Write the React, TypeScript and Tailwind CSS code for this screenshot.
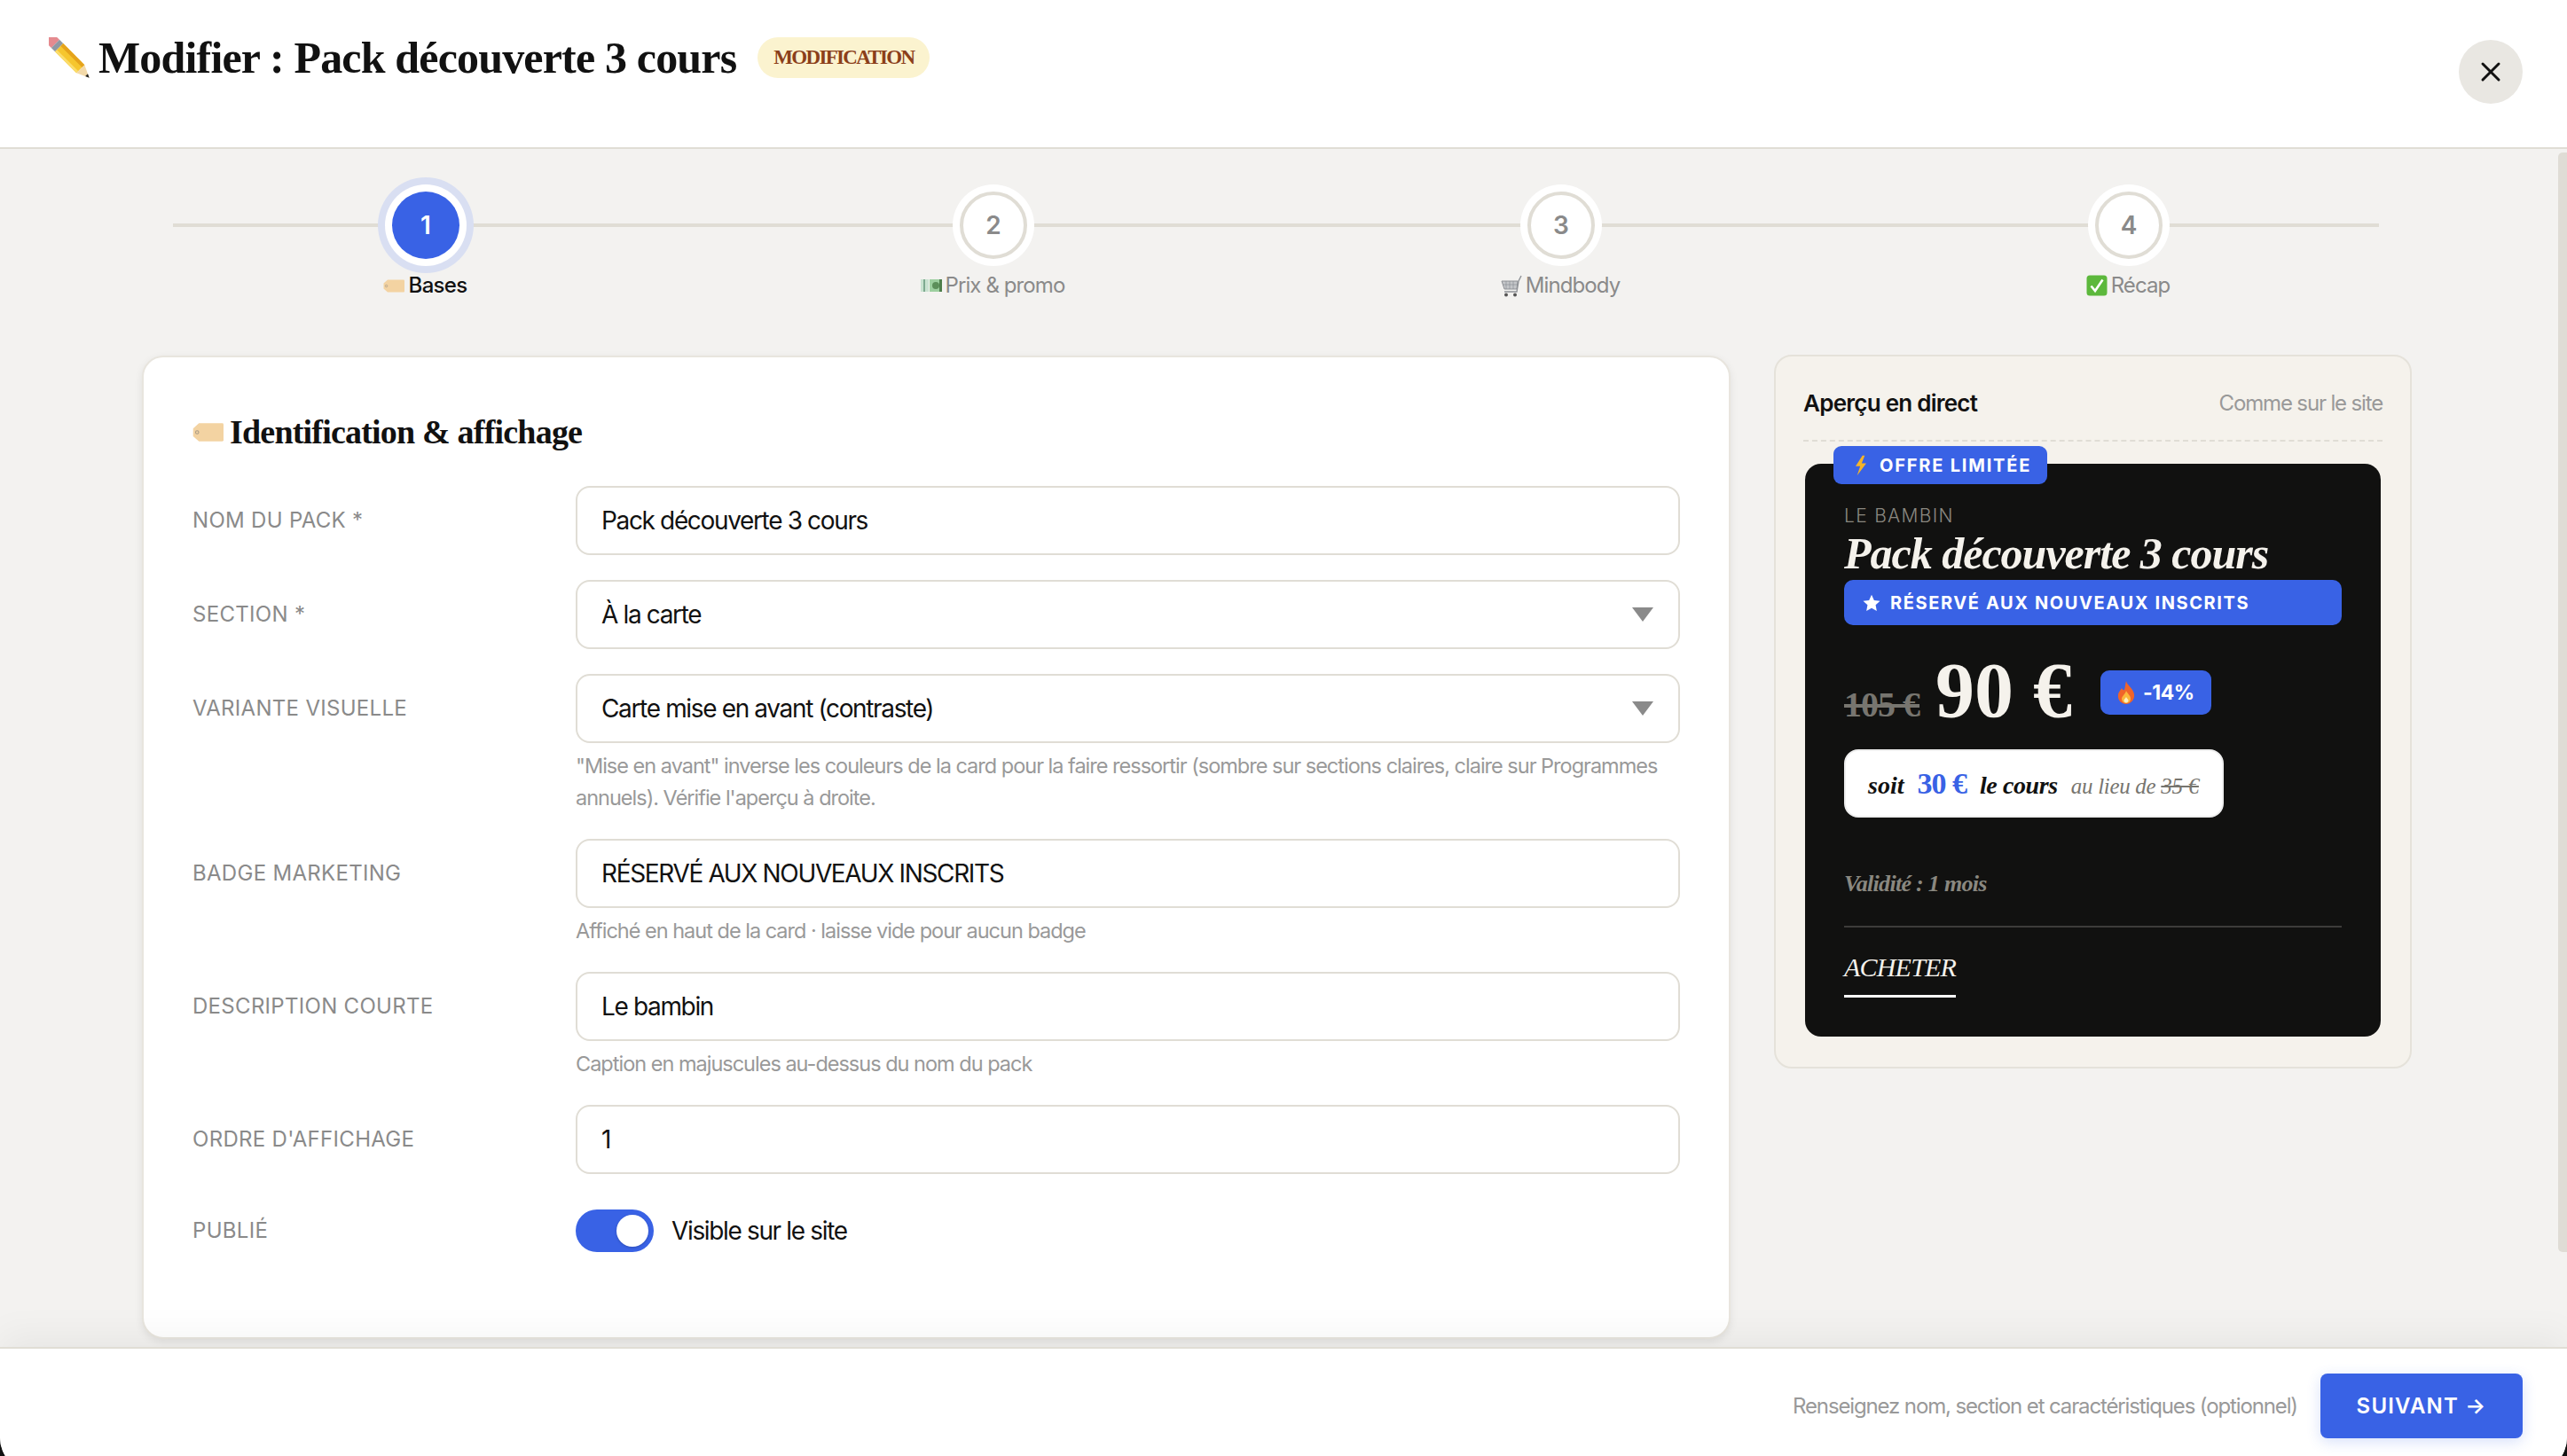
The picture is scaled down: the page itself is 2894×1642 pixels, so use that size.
import { ReactNode } from "react";
import { X } from "lucide-react";

const steps = [
  { n: 1, label: "Bases", active: true },
  { n: 2, label: "Prix & promo" },
  { n: 3, label: "Mindbody" },
  { n: 4, label: "Récap" },
];

function Pencil() {
  return (
    <svg width="46" height="46" viewBox="0 0 46 46" className="shrink-0">
      <g transform="rotate(-45 23 23)">
        <path d="M16.5 1 V-3 a6.5 6.5 0 0 1 13 0 V1 Z" fill="#e58a8f" />
        <rect x="16.5" y="1" width="13" height="6" fill="#8f98a3" />
        <rect x="16.5" y="7" width="13" height="34" fill="#f6c62e" />
        <rect x="16.5" y="7" width="3" height="34" fill="#fbdc6a" />
        <rect x="25.5" y="7" width="4" height="34" fill="#e5a31c" />
        <path d="M16.5 41 L29.5 41 L23 55 Z" fill="#f3d9a8" />
        <path d="M21 50.7 L25 50.7 L23 55 Z" fill="#222" />
      </g>
    </svg>
  );
}

function Tag({ w, h }: { w: number; h: number }) {
  return (
    <svg width={w} height={h} viewBox="0 0 24 15" className="shrink-0">
      <path d="M5 0.5 H23 a1 1 0 0 1 1 1 V13.5 a1 1 0 0 1 -1 1 H5 L0.5 10.5 V4.5 Z" fill="#f3d3a2" />
      <circle cx="3.6" cy="7.5" r="1.2" fill="#f3d3a2" stroke="#a89a85" strokeWidth="0.7" />
    </svg>
  );
}

function Money() {
  return (
    <svg width="24" height="16" viewBox="0 0 24 16" className="shrink-0">
      <rect x="0" y="1" width="9" height="14" fill="#c9e2d0" />
      <rect x="3" y="1" width="2" height="14" fill="#7eaa90" />
      <rect x="10" y="1" width="14" height="14" fill="#9ccf9f" />
      <circle cx="17" cy="8" r="4" fill="#5b8f5a" />
      <rect x="21" y="1" width="3" height="14" fill="#4e7f4c" />
    </svg>
  );
}

function Cart() {
  return (
    <svg width="24" height="25" viewBox="0 0 24 25" className="shrink-0">
      <path d="M1 7 H19 L18 16 H4 Z" fill="#c4c6c9" stroke="#8e9196" strokeWidth="1" />
      <path d="M23 1 L20 7 L18 19 H4" fill="none" stroke="#8e9196" strokeWidth="1.4" />
      <path d="M6 7 V16 M10 7 V16 M14 7 V16 M2 11 H18" stroke="#8e9196" strokeWidth="0.7" />
      <circle cx="6" cy="22.5" r="2" fill="#555" />
      <circle cx="16" cy="22.5" r="2" fill="#555" />
    </svg>
  );
}

function Check() {
  return (
    <svg width="24" height="24" viewBox="0 0 24 24" className="shrink-0">
      <rect x="0.5" y="0.5" width="23" height="23" rx="3.5" fill="#5cb83c" />
      <path d="M5.5 12.5 L10 18 L18.5 5.5" fill="none" stroke="#fff" strokeWidth="2.6" />
    </svg>
  );
}

function Bolt() {
  return (
    <svg width="18" height="24" viewBox="0 0 18 28" className="shrink-0">
      <path d="M11 1 L2 15 L8 15 L4 27 L16 11 L10 11 L14 1 Z" fill="#f5b52a" />
    </svg>
  );
}

function Star() {
  return (
    <svg width="20" height="20" viewBox="0 0 24 24" className="shrink-0">
      <path d="M12 1 L15.4 8.3 L23.4 9.3 L17.5 14.8 L19 22.7 L12 18.8 L5 22.7 L6.5 14.8 L0.6 9.3 L8.6 8.3 Z" fill="#fff" />
    </svg>
  );
}

function Flame() {
  return (
    <svg width="20" height="26" viewBox="0 0 20 26" className="shrink-0">
      <path d="M10 0 C11 5 18 8 19 15 C20 21 15 26 10 26 C5 26 0 22 1 15 C1.5 12 4 10 5 8 C6 10 7 10.5 8 10 C9 7 9 3 10 0 Z" fill="#f0642a" />
      <path d="M10 11 C11 14 15 16 15 20 C15 23 12.5 25 10 25 C7.5 25 5 23 5 20 C5 17 9 15 10 11 Z" fill="#fbb73c" />
      <path d="M10 18 C10.5 19.5 12.5 20.5 12.5 22 C12.5 23.5 11 24.5 10 24.5 C9 24.5 7.5 23.5 7.5 22 C7.5 20.5 9.5 19.5 10 18 Z" fill="#fdeec0" />
    </svg>
  );
}

function StepIcon({ n }: { n: number }) {
  if (n === 1) return <Tag w={24} h={15} />;
  if (n === 2) return <Money />;
  if (n === 3) return <Cart />;
  return <Check />;
}

function Field({ children, arrow }: { children: ReactNode; arrow?: boolean }) {
  return (
    <div className="flex h-[78px] items-center justify-between rounded-[16px] border-2 border-[#e0ddd5] bg-white pl-[27px] pr-[28px] text-[28px] tracking-[-1.35px] text-[#111]">
      <span>{children}</span>
      {arrow && <span className="h-0 w-0 border-x-[12px] border-t-[16px] border-x-transparent border-t-[#8a8a8a]" />}
    </div>
  );
}

function Row({ label, hint, children }: { label: string; hint?: ReactNode; children: ReactNode }) {
  return (
    <div className="mb-[28px] grid grid-cols-[432px_1fr]">
      <div className="flex h-[78px] items-center text-[24px] tracking-[0.3px] text-[#8a8a8a]">{label}</div>
      <div>
        {children}
        {hint && <p className="mt-[8px] text-[23.5px] leading-[36px] tracking-[-1px] text-[#999]">{hint}</p>}
      </div>
    </div>
  );
}

export default function App() {
  return (
    <div className="h-[1642px] w-[2894px] overflow-hidden bg-[#111] font-['Inter',sans-serif]">
      <div className="flex h-[1661px] flex-col overflow-hidden rounded-b-[40px] bg-white">
        <header className="flex h-[168px] shrink-0 items-start justify-between border-b-2 border-[#e0ddd5] pl-[55px] pr-[50px] pt-[42px]">
          <div className="flex h-[46px] items-center">
            <Pencil />
            <h1 className="ml-[10px] font-['Liberation_Serif',serif] text-[50px] font-bold leading-none tracking-[-0.83px] text-[#111]">
              Modifier : Pack découverte 3 cours
            </h1>
            <span className="ml-[24px] flex h-[46px] items-center rounded-full bg-[#fbf3cf] px-[18px] font-['Liberation_Serif',serif] text-[23px] font-bold tracking-[-1.7px] text-[#8b3f1a]">
              MODIFICATION
            </span>
          </div>
          <button className="mt-[3px] flex h-[72px] w-[72px] items-center justify-center rounded-full bg-[#e9e7e2]">
            <X size={36} strokeWidth={2} color="#111" />
          </button>
        </header>

        <main className="relative flex-1 overflow-hidden bg-[#f3f2f0] pl-[160px]">
          <div className="absolute right-0 top-[4px] h-[1240px] w-[10px] rounded-l-[5px] bg-[#dfdcd5]" />

          <div className="relative grid w-[2560px] grid-cols-4 pt-[48px]">
            <div className="absolute left-[35px] top-[84px] h-[4px] w-[2487px] bg-[#e0ddd5]" />
            {steps.map((s) => (
              <div key={s.n} className="relative flex flex-col items-center">
                {s.active ? (
                  <div className="flex h-[76px] w-[76px] items-center justify-center rounded-full bg-[#3962e5] text-[28px] font-semibold text-white shadow-[0_0_0_8px_#fff,0_0_0_16px_#d9dff2]">
                    {s.n}
                  </div>
                ) : (
                  <div className="flex h-[76px] w-[76px] items-center justify-center rounded-full border-[4px] border-[#e0ddd5] bg-white text-[28px] font-semibold text-[#8a8a8a] shadow-[0_0_0_8px_#fff]">
                    {s.n}
                  </div>
                )}
                <div
                  className={
                    s.active
                      ? "mt-[15px] flex h-[30px] items-center gap-[5px] text-[24px] font-medium tracking-[-0.7px] text-[#111] -translate-x-[1px]"
                      : "mt-[15px] flex h-[30px] items-center gap-[4px] text-[24px] tracking-[-0.9px] text-[#8a8a8a] -translate-x-[1px]"
                  }
                >
                  <StepIcon n={s.n} />
                  {s.label}
                </div>
              </div>
            ))}
          </div>

          <div className="mt-[64px] flex items-start gap-[49px]">
            <section className="w-[1791px] shrink-0 rounded-[24px] border-2 border-[#e8e5de] bg-white px-[55px] pb-[84px] pt-[62px] shadow-[0_3px_10px_rgba(0,0,0,0.08)]">
              <h2 className="mb-[39px] flex h-[44px] items-center gap-[7px] font-['Liberation_Serif',serif] text-[38px] font-bold tracking-[-0.8px] text-[#111]">
                <Tag w={35} h={23} />
                Identification &amp; affichage
              </h2>
              <Row label="NOM DU PACK *">
                <Field>Pack découverte 3 cours</Field>
              </Row>
              <Row label="SECTION *">
                <Field arrow>À la carte</Field>
              </Row>
              <Row
                label="VARIANTE VISUELLE"
                hint={`"Mise en avant" inverse les couleurs de la card pour la faire ressortir (sombre sur sections claires, claire sur Programmes annuels). Vérifie l'aperçu à droite.`}
              >
                <Field arrow>Carte mise en avant (contraste)</Field>
              </Row>
              <Row label="BADGE MARKETING" hint="Affiché en haut de la card · laisse vide pour aucun badge">
                <Field>RÉSERVÉ AUX NOUVEAUX INSCRITS</Field>
              </Row>
              <Row label="DESCRIPTION COURTE" hint="Caption en majuscules au-dessus du nom du pack">
                <Field>Le bambin</Field>
              </Row>
              <Row label="ORDRE D'AFFICHAGE">
                <Field>1</Field>
              </Row>
              <div className="grid h-[72px] grid-cols-[432px_1fr] items-center">
                <div className="text-[24px] tracking-[0.3px] text-[#8a8a8a]">PUBLIÉ</div>
                <div className="flex items-center gap-[20px] text-[28px] tracking-[-1.35px] text-[#111]">
                  <div className="flex h-[48px] w-[88px] items-center justify-end rounded-full bg-[#3962e5] pr-[6px]">
                    <div className="h-[36px] w-[36px] rounded-full bg-white shadow-[0_1px_3px_rgba(0,0,0,0.2)]" />
                  </div>
                  Visible sur le site
                </div>
              </div>
            </section>

            <aside className="mt-[-1px] w-[719px] shrink-0 rounded-[20px] border-2 border-[#e5e2da] bg-[#f5f2ec] px-[31px] pb-[34px] pt-[35px]">
              <div className="flex items-center justify-between border-b-2 border-dashed border-[#e0ddd5] pb-[23px] leading-[36px]">
                <span className="text-[26px] font-semibold tracking-[-0.75px] text-[#111]">Aperçu en direct</span>
                <span className="text-[24px] tracking-[-1.15px] text-[#999]">Comme sur le site</span>
              </div>

              <div className="relative ml-[2px] mr-[2px] mt-[25px] rounded-[18px] bg-[#111110] px-[44px] pb-[44px] pt-[45px]">
                <div className="absolute left-[32px] top-[-20px] flex h-[43px] items-center gap-[12px] rounded-[9px] bg-[#3962e5] pl-[22px] pr-[18px] text-[20px] font-bold tracking-[1.8px] text-white">
                  <Bolt />
                  OFFRE LIMITÉE
                </div>
                <div className="text-[21px] font-light leading-[28px] tracking-[1.3px] text-[#8a8880]">LE BAMBIN</div>
                <div className="font-['Liberation_Serif',serif] text-[50px] font-semibold italic leading-[56px] tracking-[-1px] text-[#f5f2ec]">
                  Pack découverte 3 cours
                </div>
                <div className="mt-[2px] flex h-[51px] items-center gap-[11px] rounded-[10px] bg-[#3962e5] pl-[21px] text-[20px] font-bold tracking-[1.6px] text-white">
                  <Star />
                  RÉSERVÉ AUX NOUVEAUX INSCRITS
                </div>

                <div className="mt-[29px] flex h-[90px] items-center">
                  <div className="flex items-baseline gap-[18px] font-['Liberation_Serif',serif] font-bold">
                    <span className="text-[40px] tracking-[-1px] text-[#77756f] line-through">105 €</span>
                    <span className="text-[88px] leading-[90px] text-[#f5f2ec]">90 €</span>
                  </div>
                  <div className="ml-[32px] mt-[4px] flex h-[50px] items-center gap-[9px] rounded-[10px] bg-[#3962e5] px-[19px] text-[23px] font-bold tracking-[-0.5px] text-white">
                    <Flame />
                    -14%
                  </div>
                </div>

                <div className="mt-[21px] flex h-[77px] w-[428px] items-baseline gap-[15px] rounded-[16px] border-2 border-[#eeeeee] bg-white pl-[25px] pt-[11px] font-['Liberation_Serif',serif] text-[28px] font-bold italic text-[#111]">
                  <span>soit</span>
                  <span className="text-[34px] not-italic tracking-[-1px] text-[#3962e5]">30 €</span>
                  <span className="tracking-[-0.4px]">le cours</span>
                  <span className="text-[25px] font-normal tracking-[-0.3px] text-[#77756f]">
                    au lieu de <span className="line-through">35 €</span>
                  </span>
                </div>

                <div className="mt-[57px] font-['Liberation_Serif',serif] text-[26px] font-bold italic leading-[36px] tracking-[-0.7px] text-[#8a8880]">
                  Validité : 1 mois
                </div>
                <div className="mt-[29px] h-[2px] bg-[#3d3c3a]" />
                <div className="mt-[25px] inline-block border-b-[3px] border-white pb-[11px] font-['Liberation_Serif',serif] text-[30px] italic leading-[40px] tracking-[-0.8px] text-[#f5f2ec]">
                  ACHETER
                </div>
              </div>
            </aside>
          </div>
        </main>

        <footer className="relative flex h-[142px] shrink-0 items-start justify-end gap-[26px] border-t-2 border-[#e0ddd5] bg-white pr-[50px] pt-[28px] shadow-[0_-12px_40px_rgba(0,0,0,0.05)]">
          <span className="flex h-[73px] items-center text-[24px] tracking-[-1.13px] text-[#999]">
            Renseignez nom, section et caractéristiques (optionnel)
          </span>
          <button className="flex h-[73px] w-[228px] items-center justify-center rounded-[8px] bg-[#3962e5] text-[24px] font-semibold tracking-[1.2px] text-white shadow-[0_4px_16px_rgba(57,98,229,0.2)]">
            SUIVANT →
          </button>
        </footer>
      </div>
    </div>
  );
}
